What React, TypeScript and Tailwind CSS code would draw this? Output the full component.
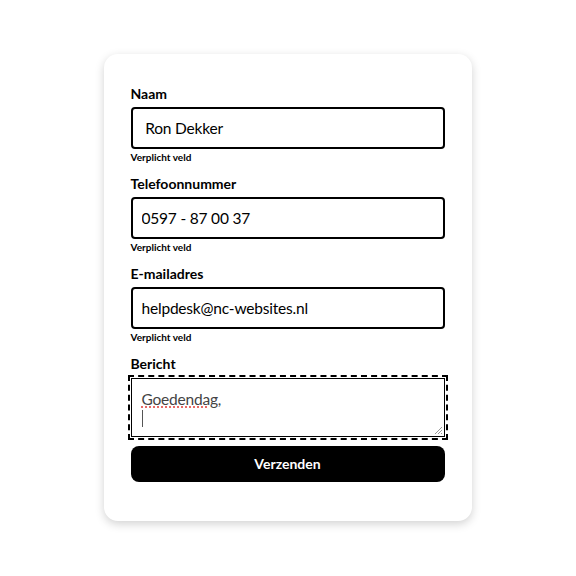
import React from "react";

const fields = [
  { label: "Naam", value: " Ron Dekker" },
  { label: "Telefoonnummer", value: "0597 - 87 00 37" },
  { label: "E-mailadres", value: "helpdesk@nc-websites.nl" },
];

export default function App() {
  return (
    <div
      className="min-h-screen bg-white flex items-center justify-center"
      style={{ fontFamily: "Lato, 'Open Sans', sans-serif" }}
    >
      <form className="w-[368px] -mt-[2px] -ml-[1px] bg-white rounded-[14px] shadow-[0_3px_10px_rgba(0,0,0,0.18)] pt-[30px] pb-[39px] px-[27px]">
        {fields.map((f) => (
          <div key={f.label} className="mb-[10px]">
            <label className="block text-[14px] leading-5 font-bold text-black mb-[3px]">
              {f.label}
            </label>
            <input
              readOnly
              value={f.value}
              className="block w-full h-[42px] border-2 border-black rounded-[4px] px-[9px] text-[15.5px] tracking-[-0.2px] text-black bg-white outline-none"
            />
            <p className="mt-[1px] text-[10px] leading-[14px] font-bold text-black">
              Verplicht veld
            </p>
          </div>
        ))}

        <label className="block text-[14px] leading-5 font-bold text-black mb-[4px]">
          Bericht
        </label>
        <div className="relative h-[59px] border border-black outline-2 outline-dashed outline-black outline-offset-1 bg-white px-[10px] pt-[10px] text-[15.5px] tracking-[-0.2px] leading-5 text-[#444]">
          <span className="underline decoration-dotted decoration-[#e0413a] underline-offset-2">
            Goedendag,
          </span>
          <div className="w-px h-[17px] bg-[#555] mt-[1px]" />
          <svg
            className="absolute right-[1px] bottom-[1px]"
            width="9"
            height="9"
            viewBox="0 0 9 9"
          >
            <path d="M8 1L1 8M8 4L4 8M8 7L7 8" stroke="#999" strokeWidth="1" />
          </svg>
        </div>

        <button
          type="button"
          className="mt-[9px] w-full h-9 rounded-[8px] bg-black text-white text-[14px] font-bold"
        >
          Verzenden
        </button>
      </form>
    </div>
  );
}
